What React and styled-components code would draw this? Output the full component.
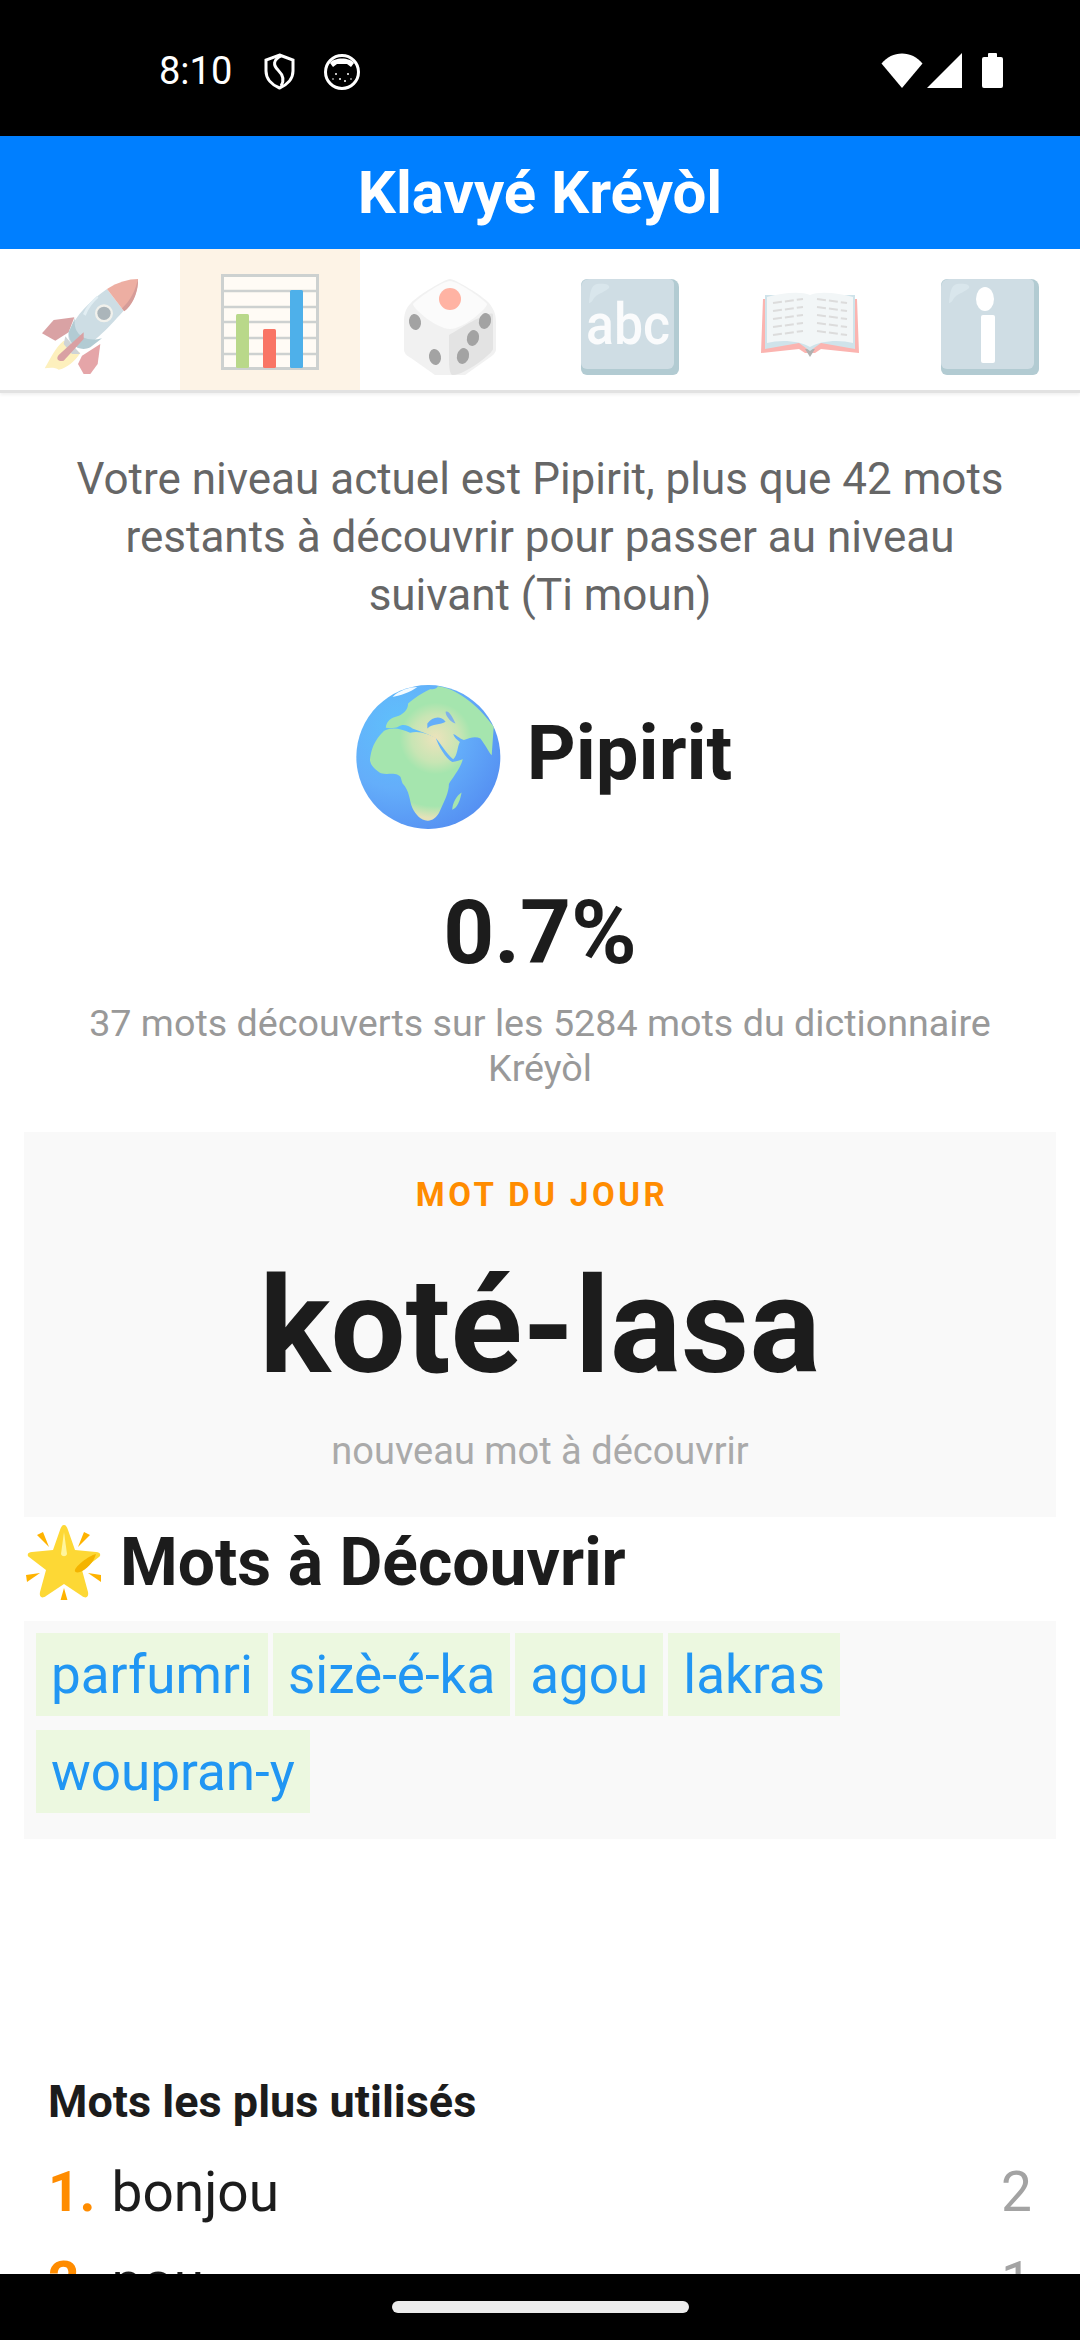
import React from 'react';
import styled, { createGlobalStyle } from 'styled-components';

const Global = createGlobalStyle`
  html, body { margin: 0; padding: 0; background: #000; }
  * { box-sizing: border-box; }
  body { font-family: Roboto, "Noto Sans", sans-serif; }
`;

const Screen = styled.div`
  width: 1080px;
  height: 2340px;
  display: flex;
  flex-direction: column;
  background: #fff;
  overflow: hidden;
`;

const StatusBar = styled.div`
  flex: 0 0 136px;
  background: #000;
  color: #fff;
  display: flex;
  align-items: flex-start;
  padding: 53px 77px 0 159px;
`;

const Time = styled.span`
  font-size: 38px;
  line-height: 36px;
  margin-right: 32px;
`;

const StatusLeft = styled.div`
  display: flex;
  align-items: center;
  gap: 29px;
`;

const StatusRight = styled.div`
  display: flex;
  align-items: center;
  margin-left: auto;
  gap: 4px;
`;

const Header = styled.div`
  flex: 0 0 113px;
  background: #007fff;
  color: #fff;
  font-size: 60px;
  font-weight: 700;
  display: flex;
  align-items: center;
  justify-content: center;
`;

const Tabs = styled.div`
  flex: 0 0 144px;
  display: flex;
  background: #fff;
  border-bottom: 3px solid #e2e2e2;
  box-shadow: 0 2px 3px rgba(0, 0, 0, 0.06);
  position: relative;
`;

const Tab = styled.div`
  width: 180px;
  height: 141px;
  display: flex;
  justify-content: center;
  padding-top: ${(p) => (p.$active ? '25px' : '30px')};
  background: ${(p) => (p.$active ? '#fdf3e6' : 'transparent')};
`;

const Content = styled.div`
  flex: 1;
  min-height: 0;
  overflow: hidden;
  padding: 0 24px;
  display: flex;
  flex-direction: column;

  & > * {
    flex-shrink: 0;
  }
`;

const Intro = styled.p`
  margin: 57px 0 0;
  padding: 0 28px;
  font-size: 44px;
  line-height: 58px;
  color: #666;
  text-align: center;
`;

const LevelRow = styled.div`
  margin-top: 61px;
  padding-left: 8px;
  display: flex;
  align-items: center;
  justify-content: center;
  gap: 26px;
`;

const LevelName = styled.span`
  font-size: 76px;
  font-weight: 700;
  color: #1c1c1c;
  margin-top: -8px;
`;

const Percent = styled.div`
  margin-top: 55px;
  text-align: center;
  font-size: 89px;
  line-height: 98px;
  font-weight: 700;
  color: #1c1c1c;
`;

const Discovered = styled.div`
  margin-top: 19px;
  padding: 0 24px;
  text-align: center;
  font-size: 37.7px;
  line-height: 45px;
  color: #999;
`;

const WordCard = styled.div`
  margin-top: 41px;
  height: 385px;
  background: #f9f9f9;
  display: flex;
  flex-direction: column;
  align-items: center;
  padding-top: 45px;
`;

const WordLabel = styled.div`
  margin-left: 4px;
  font-size: 33px;
  line-height: 36px;
  font-weight: 700;
  letter-spacing: 3.5px;
  color: #ff8c00;
`;

const Word = styled.div`
  margin-top: 36px;
  font-size: 133px;
  line-height: 155px;
  font-weight: 700;
  color: #1c1c1c;
`;

const WordHint = styled.div`
  margin-top: 25px;
  font-size: 38px;
  line-height: 44px;
  color: #aaa;
`;

const SectionTitle = styled.div`
  display: flex;
  align-items: center;
  height: 104px;
  gap: 18px;
  padding: 0 0 14px 2px;
  font-size: 66px;
  font-weight: 700;
  color: #1c1c1c;
`;

const ChipPanel = styled.div`
  background: #f9f9f9;
  padding: 12px 12px 26px;
  display: flex;
  flex-wrap: wrap;
  gap: 14px 5px;
`;

const Chip = styled.span`
  height: 83px;
  padding: 0 15px;
  display: flex;
  align-items: center;
  background: #ecf8e0;
  color: #2196f3;
  font-size: 53px;
`;

const RankTitle = styled.div`
  margin: 238px 0 0 24px;
  font-size: 45px;
  line-height: 50px;
  font-weight: 700;
  color: #1c1c1c;
`;

const RankList = styled.div`
  margin-top: 34px;
  padding: 0 24px;
  display: flex;
  flex-direction: column;
  gap: 28px;
`;

const RankRow = styled.div`
  display: flex;
  align-items: center;
  font-size: 55px;
  line-height: 62px;
  color: #1c1c1c;
`;

const RankNum = styled.span`
  color: #ff8c00;
  font-weight: 700;
  margin-right: 16px;
`;

const RankCount = styled.span`
  margin-left: auto;
  color: #a3a3a3;
`;

const NavBar = styled.div`
  flex: 0 0 66px;
  background: #000;
  display: flex;
  justify-content: center;
  padding-top: 27px;
  position: relative;
`;

const NavPill = styled.div`
  width: 297px;
  height: 12px;
  border-radius: 6px;
  background: #ececec;
`;

const KeyLabel = styled.text`
  font-family: Roboto, sans-serif;
  font-size: 58px;
  font-weight: 500;
  fill: #fafbfc;
`;

const Shield = () => (
  <svg width="31" height="37" viewBox="0 0 31 37" fill="none" stroke="#fff" strokeWidth="3">
    <path d="M15.5 2 L29 7 V18 C29 26 23 32 15.5 35 C8 32 2 26 2 18 V7 Z" />
    <path d="M17 3 C9 7 9 12 14 17 C19 22 21 27 17 33" />
  </svg>
);

const CatFace = () => (
  <svg width="36" height="36" viewBox="0 0 36 36">
    <circle cx="18" cy="18" r="16.5" fill="#000" stroke="#fff" strokeWidth="3" />
    <path d="M6 9 C10 3 26 3 30 9 L27 13 L23 10 H13 L9 13 Z" fill="#fff" />
    <g fill="#fff">
      <circle cx="12" cy="20" r="1" />
      <circle cx="24" cy="20" r="1" />
      <circle cx="16" cy="25" r="1" />
      <circle cx="21" cy="27" r="1" />
      <circle cx="9" cy="25" r="0.8" />
      <circle cx="27" cy="25" r="0.8" />
    </g>
  </svg>
);

const Wifi = () => (
  <svg width="42" height="35" viewBox="0 0 42 35">
    <path d="M21 35 L0.5 10.5 C6 4 13 0.5 21 0.5 C29 0.5 36 4 41.5 10.5 Z" fill="#fff" />
  </svg>
);

const Signal = () => (
  <svg width="35" height="35" viewBox="0 0 35 35">
    <path d="M0 35 L35 0 V35 Z" fill="#fff" />
  </svg>
);

const Battery = () => (
  <svg width="21" height="35" viewBox="0 0 21 35" style={{ marginLeft: 16 }}>
    <path d="M6 4 V1 a1 1 0 0 1 1-1 h7 a1 1 0 0 1 1 1 V4 h4 a2 2 0 0 1 2 2 V33 a2 2 0 0 1-2 2 H2 a2 2 0 0 1-2-2 V6 a2 2 0 0 1 2-2 Z" fill="#fff" />
  </svg>
);

const Rocket = () => (
  <svg width="96" height="95" viewBox="125 90 288 285">
    <path d="M222 205 L160 213 L125 253 L165 275 L205 250 Z" fill="#d9a2a4" />
    <path d="M300 285 L245 320 L233 345 L250 375 H270 L292 345 Z" fill="#e5a5a8" />
    <path d="M190 275 C165 295 150 330 133 358 C150 355 165 355 175 362 C200 358 225 335 240 312 Z" fill="#fdf0bd" />
    <path d="M195 262 L240 315 L215 315 L190 285 Z" fill="#cfd4d6" />
    <path d="M320 120 C270 155 225 200 205 250 C200 270 210 285 235 298 C270 295 320 240 370 185 Z" fill="#cddde4" />
    <path d="M225 205 C215 240 240 285 305 268 L270 295 C240 310 205 290 205 250 Z" fill="#b2cbd3" />
    <path d="M320 120 C350 100 385 90 413 90 C413 130 395 170 370 185 Z" fill="#edaea2" />
    <path d="M413 90 C415 130 395 170 372 187 L365 178 C390 155 405 125 413 90 Z" fill="#d69c98" />
    <path d="M290 140 C272 155 258 172 248 195 L256 200 C264 178 278 160 294 146 Z" fill="#e2eef3" />
    <circle cx="311" cy="193" r="27" fill="#f1f1ec" />
    <circle cx="311" cy="193" r="20" fill="#abb5ba" />
    <path d="M250 250 L175 318 C165 330 175 340 190 335 L250 270 Z" fill="#d9a0a3" />
  </svg>
);

const Chart = () => (
  <svg width="98" height="96" viewBox="0 0 98 96">
    <rect x="1.5" y="1.5" width="95" height="93" fill="#fffbf5" stroke="#cdd1d0" strokeWidth="3" />
    <g stroke="#cdd1d0" strokeWidth="2.5">
      <path d="M2 17 H96 M2 33 H96 M2 48 H96 M2 64 H96 M2 80 H96" />
    </g>
    <rect x="15" y="40" width="13" height="54" rx="1.5" fill="#b9d88a" />
    <rect x="42" y="55" width="13" height="39" rx="1.5" fill="#f97565" />
    <rect x="69" y="16" width="13" height="78" rx="1.5" fill="#4eb0ea" />
  </svg>
);

const Dice = () => (
  <svg width="94" height="96" viewBox="0 0 94 96">
    <path d="M47 0 C52 0 80 17 86 24 C92 32 93 36 93 44 V70 C93 74 90 76 86 79 L62 96 H32 L8 79 C3 76 1 74 1 70 V44 C1 36 2 30 8 24 C14 17 42 0 47 0 Z" fill="#f1f1f1" />
    <path d="M46 56 C50 54 90 28 90 36 V70 C90 74 62 96 50 96 C47 96 46 90 46 80 Z" fill="#e3e3e3" />
    <path d="M47 2 C54 2 78 18 84 25 C84 30 60 50 47 50 C34 50 10 30 10 25 C16 18 40 2 47 2 Z" fill="#fbfbfb" />
    <circle cx="47" cy="20" r="11" fill="#ffb3a3" />
    <g fill="#a3a3a3">
      <ellipse cx="12" cy="43" rx="6" ry="8" transform="rotate(-10 12 43)" />
      <ellipse cx="32" cy="78" rx="6" ry="8" transform="rotate(-10 32 78)" />
      <ellipse cx="82" cy="42" rx="6" ry="8" transform="rotate(14 82 42)" />
      <ellipse cx="70" cy="59" rx="6" ry="8" transform="rotate(14 70 59)" />
      <ellipse cx="60" cy="77" rx="6" ry="8" transform="rotate(14 60 77)" />
    </g>
  </svg>
);

const KeyBase = ({ children }) => (
  <svg width="98" height="96" viewBox="0 0 98 96">
    <path d="M6 0 H90 A8 8 0 0 1 98 8 V90 A6 6 0 0 1 92 96 H6 A6 6 0 0 1 0 90 V6 A6 6 0 0 1 6 0 Z" fill="#b2cbd2" />
    <path d="M8 0 H88 A5 5 0 0 1 93 5 V84 A6 6 0 0 1 87 90 H6 A6 6 0 0 1 0 84 V8 A8 8 0 0 1 8 0 Z" fill="#cfdde4" />
    <path d="M8 24 C9 14 10 6 16 5 C22 4 30 5 28 9 C26 12 18 14 14 18 C12 20 11 24 8 24 Z" fill="#d9e6ec" />
    {children}
  </svg>
);

const Abc = () => (
  <KeyBase>
    <KeyLabel x="5" y="65" textLength="84" lengthAdjust="spacingAndGlyphs">abc</KeyLabel>
  </KeyBase>
);

const Info = () => (
  <KeyBase>
    <ellipse cx="44" cy="20" rx="9" ry="12" fill="#fff" />
    <rect x="40" y="36" width="14" height="48" rx="2" fill="#fff" />
  </KeyBase>
);

const Book = () => (
  <svg width="98" height="68" viewBox="0 0 98 68" style={{ marginTop: 12 }}>
    <path d="M2 8 L0 62 L38 58 L44 62 H54 L60 58 L98 62 L96 8 Z" fill="#fbb4b0" />
    <path d="M44 58 L49 66 L54 58 Z" fill="#b1b1b1" />
    <path d="M4 4 V58 L38 52 L49 60 L60 52 L94 58 V4 Z" fill="#cfe3ea" />
    <path d="M6 6 C20 2 40 0 49 4 C58 0 78 2 92 6 V52 C78 48 58 50 49 56 C40 50 20 48 6 52 Z" fill="#f2f6f7" />
    <g stroke="#dcdcdc" strokeWidth="2" strokeDasharray="9 3">
      <path d="M12 12 L42 8 M12 20 L42 16 M12 28 L42 24 M12 36 L42 32 M12 44 L42 40" />
      <path d="M56 8 L86 12 M56 16 L86 20 M56 24 L86 28 M56 32 L86 36 M56 40 L86 44" />
    </g>
  </svg>
);

const Globe = () => (
  <svg width="145" height="144" viewBox="105 75 437 432">
    <defs>
      <radialGradient id="sea" cx="30%" cy="28%" r="80%">
        <stop offset="0%" stopColor="#5fc0fb" />
        <stop offset="55%" stopColor="#64aefa" />
        <stop offset="100%" stopColor="#5590f2" />
      </radialGradient>
      <radialGradient id="land" gradientUnits="userSpaceOnUse" cx="345" cy="235" r="240">
        <stop offset="0%" stopColor="#ece3bb" />
        <stop offset="30%" stopColor="#c8e5b4" />
        <stop offset="45%" stopColor="#a5e5ae" />
        <stop offset="85%" stopColor="#a5e5ae" />
        <stop offset="100%" stopColor="#e3e2b8" />
      </radialGradient>
    </defs>
    <circle cx="323" cy="291" r="217" fill="url(#sea)" />
    <path d="M147 300 C150 270 160 240 190 212 C215 200 240 206 268 218 C295 210 320 222 345 232 C352 255 375 295 395 306 C408 306 418 300 427 298 C420 325 395 355 385 372 C385 400 370 425 355 460 C345 475 335 484 320 483 C300 482 285 465 275 445 C265 420 268 395 245 370 C240 355 242 350 232 345 C215 338 200 345 180 340 C165 330 150 320 147 300 Z" fill="url(#land)" />
    <path d="M195 203 C195 190 205 175 225 170 C245 165 262 150 262 130 C285 110 300 100 325 88 C335 85 345 90 352 78 C400 82 470 130 520 200 L514 286 C505 275 495 255 480 235 C465 228 450 232 430 240 C415 235 408 225 398 222 C400 232 410 240 418 246 C410 260 412 285 398 298 C380 285 360 250 345 234 C325 222 300 215 275 205 C262 195 245 190 232 200 C222 205 205 205 195 203 Z" fill="url(#land)" />
    <path d="M320 190 C335 170 360 165 375 185 C360 195 335 190 320 205 Z" fill="#64aefa" />
    <path d="M375 155 C385 150 395 170 405 190 C395 190 375 170 375 155 Z" fill="#7fb2ea" />
    <path d="M395 450 C395 430 410 405 423 398 C420 420 410 445 395 450 Z" fill="#a5e5ae" />
    <path d="M215 110 C235 90 265 80 290 80 C270 95 240 105 215 110 Z" fill="#f4fbff" />
  </svg>
);

const Star = () => (
  <svg width="76" height="76" viewBox="0 0 76 76">
    <path d="M38 1 C40 1 41 3 42 6 L49 26 L70 28 C75 28 75 32 73 33 L56 46 L62 68 C63 73 60 75 56 72 L38 60 L20 72 C16 75 13 73 14 68 L20 46 L3 33 C1 32 1 28 6 28 L27 26 L34 6 C35 3 36 1 38 1 Z" fill="#fdd835" />
    <path d="M38 8 L41 30 C40 33 36 33 35 30 Z" fill="#fff59d" />
    <path d="M49 46 C50 42 62 32 70 30 C68 38 60 46 54 48 C51 49 48 48 49 46 Z" fill="#f4b400" />
    <g fill="#ffb300">
      <path d="M11 11 L17 8 L23 23 Z" />
      <path d="M64 11 L58 8 L52 23 Z" />
      <path d="M1 60 L0 53 L14 51 Z" transform="translate(0 -2)" />
      <path d="M75 60 L75 53 L62 51 Z" transform="translate(0 -2)" />
      <path d="M38 64 L42 78 H34 Z" />
    </g>
  </svg>
);

const tabIcons = [Rocket, Chart, Dice, Abc, Book, Info];
const chips = ['parfumri', 'sizè-é-ka', 'agou', 'lakras', 'woupran-y'];
const topWords = [
  { word: 'bonjou', count: 2 },
  { word: 'pou', count: 1 },
];

const App = () => (
  <Screen>
    <Global />
    <StatusBar>
      <Time>8:10</Time>
      <StatusLeft>
        <Shield />
        <CatFace />
      </StatusLeft>
      <StatusRight>
        <Wifi />
        <Signal />
        <Battery />
      </StatusRight>
    </StatusBar>
    <Header>Klavyé Kréyòl</Header>
    <Tabs>
      {tabIcons.map((Icon, i) => (
        <Tab key={i} $active={i === 1}>
          <Icon />
        </Tab>
      ))}
    </Tabs>
    <Content>
      <Intro>
        Votre niveau actuel est Pipirit, plus que 42 mots restants à découvrir pour passer au niveau suivant (Ti moun)
      </Intro>
      <LevelRow>
        <Globe />
        <LevelName>Pipirit</LevelName>
      </LevelRow>
      <Percent>0.7%</Percent>
      <Discovered>37 mots découverts sur les 5284 mots du dictionnaire Kréyòl</Discovered>
      <WordCard>
        <WordLabel>MOT DU JOUR</WordLabel>
        <Word>koté-lasa</Word>
        <WordHint>nouveau mot à découvrir</WordHint>
      </WordCard>
      <SectionTitle>
        <Star />
        Mots à Découvrir
      </SectionTitle>
      <ChipPanel>
        {chips.map((c) => (
          <Chip key={c}>{c}</Chip>
        ))}
      </ChipPanel>
      <RankTitle>Mots les plus utilisés</RankTitle>
      <RankList>
        {topWords.map((w, i) => (
          <RankRow key={w.word}>
            <RankNum>{i + 1}.</RankNum>
            {w.word}
            <RankCount>{w.count}</RankCount>
          </RankRow>
        ))}
      </RankList>
    </Content>
    <NavBar>
      <NavPill />
    </NavBar>
  </Screen>
);

export default App;
